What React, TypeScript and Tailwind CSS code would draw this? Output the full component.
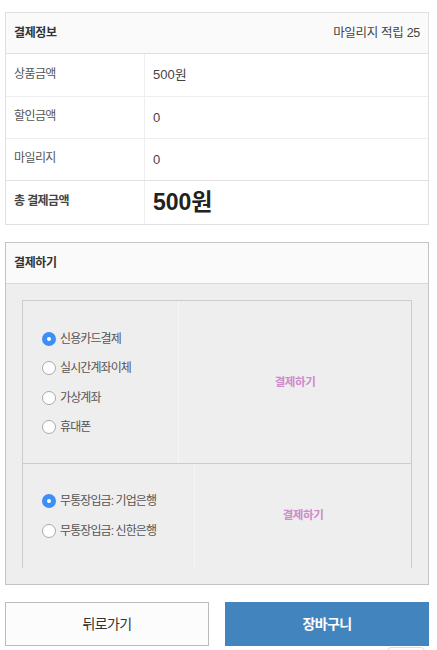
import React from "react";

const font = { fontFamily: '"Liberation Sans", "Noto Sans CJK KR", sans-serif' };

function Radio({ checked, label }: { checked?: boolean; label: string }) {
  return (
    <div className="flex items-center h-[29.5px]">
      {checked ? (
        <span className="w-[14px] h-[14px] rounded-full bg-[#3d8ff5] flex items-center justify-center shrink-0">
          <span className="w-[4px] h-[4px] rounded-full bg-white" />
        </span>
      ) : (
        <span className="w-[14px] h-[14px] rounded-full bg-white border border-[#a9a9a9] shrink-0" />
      )}
      <span className="ml-[4px] text-[12px] text-[#555] tracking-[-0.9px]">{label}</span>
    </div>
  );
}

export default function App() {
  return (
    <div className="bg-white w-[437px] min-h-[650px] px-[5px] pt-[12px]" style={font}>
      {/* 결제정보 table */}
      <div className="border border-[#e0e0e0] w-[424px]">
        <div className="h-[41px] bg-[#fafafa] border-b border-[#e0e0e0] flex items-center justify-between px-[8px] pr-[8px]">
          <span className="text-[12px] font-bold text-[#333] tracking-[-0.4px]">결제정보</span>
          <span className="text-[12.5px] text-[#444] tracking-[-0.3px]">마일리지 적립 25</span>
        </div>
        <div className="h-[43px] border-b border-[#eee] flex">
          <div className="w-[139px] border-r border-[#eee] flex items-center pl-[8px] pb-[3px] text-[12px] text-[#555] tracking-[-0.6px]">상품금액</div>
          <div className="flex items-center pl-[8px] text-[13px] text-[#444]">500원</div>
        </div>
        <div className="h-[42px] border-b border-[#eee] flex">
          <div className="w-[139px] border-r border-[#eee] flex items-center pl-[8px] pb-[3px] text-[12px] text-[#555] tracking-[-0.6px]">할인금액</div>
          <div className="flex items-center pl-[8px] text-[13px] text-[#444]">0</div>
        </div>
        <div className="h-[42px] border-b border-[#e0e0e0] flex">
          <div className="w-[139px] border-r border-[#eee] flex items-center pl-[8px] pb-[3px] text-[12px] text-[#555] tracking-[-0.6px]">마일리지</div>
          <div className="flex items-center pl-[8px] text-[13px] text-[#444]">0</div>
        </div>
        <div className="h-[43px] flex">
          <div className="w-[139px] border-r border-[#eee] flex items-center pl-[8px] pb-[3px] text-[12px] font-bold text-[#444] tracking-[-0.6px]">총 결제금액</div>
          <div className="flex items-center pl-[8px] text-[23px] font-bold text-[#222]">500원</div>
        </div>
      </div>

      {/* 결제하기 box */}
      <div className="mt-[17px] border border-[#c4c4c4] w-[424px]">
        <div className="h-[41px] bg-[#fafafa] border-b border-[#d8d8d8] flex items-center pl-[8px] text-[12px] font-bold text-[#333] tracking-[-0.4px]">
          결제하기
        </div>
        <div className="bg-[#eeeeee] px-[16px] pt-[16px] pb-[16px]">
          <div className="h-[268px] border-t border-l border-r border-[#cccccc] flex flex-col">
            <div className="h-[163px] border-b border-[#cccccc] flex">
              <div className="w-[156px] border-r border-[#f6f6f6] flex flex-col justify-center pl-[19px] pt-[2px]">
                <Radio checked label="신용카드결제" />
                <Radio label="실시간계좌이체" />
                <Radio label="가상계좌" />
                <Radio label="휴대폰" />
              </div>
              <div className="flex-1 flex items-center justify-center pt-[2px] text-[11.5px] font-bold text-[#cf8acb] tracking-[-0.4px]">
                결제하기
              </div>
            </div>
            <div className="flex-1 flex">
              <div className="w-[172px] border-r border-[#f6f6f6] flex flex-col justify-center pl-[19px]">
                <Radio checked label="무통장입금: 기업은행" />
                <Radio label="무통장입금: 신한은행" />
              </div>
              <div className="flex-1 flex items-center justify-center text-[11.5px] font-bold text-[#cf8acb] tracking-[-0.4px]">
                결제하기
              </div>
            </div>
          </div>
        </div>
      </div>

      {/* Buttons */}
      <div className="mt-[17px] flex gap-[16px] w-[424px]">
        <button className="w-[204px] h-[44px] border border-[#bbbbbb] bg-[#fcfcfc] text-[14px] text-[#333] tracking-[-0.6px]">
          뒤로가기
        </button>
        <button className="w-[204px] h-[44px] bg-[#4284bd] text-[14px] font-bold text-white tracking-[-0.6px]">
          장바구니
        </button>
      </div>
      <div className="flex justify-end w-[424px]">
        <div className="mt-[1px] mr-[4px] w-[38px] h-[12px] border border-[#dddddd] rounded-t-[4px] bg-white" />
      </div>
    </div>
  );
}
